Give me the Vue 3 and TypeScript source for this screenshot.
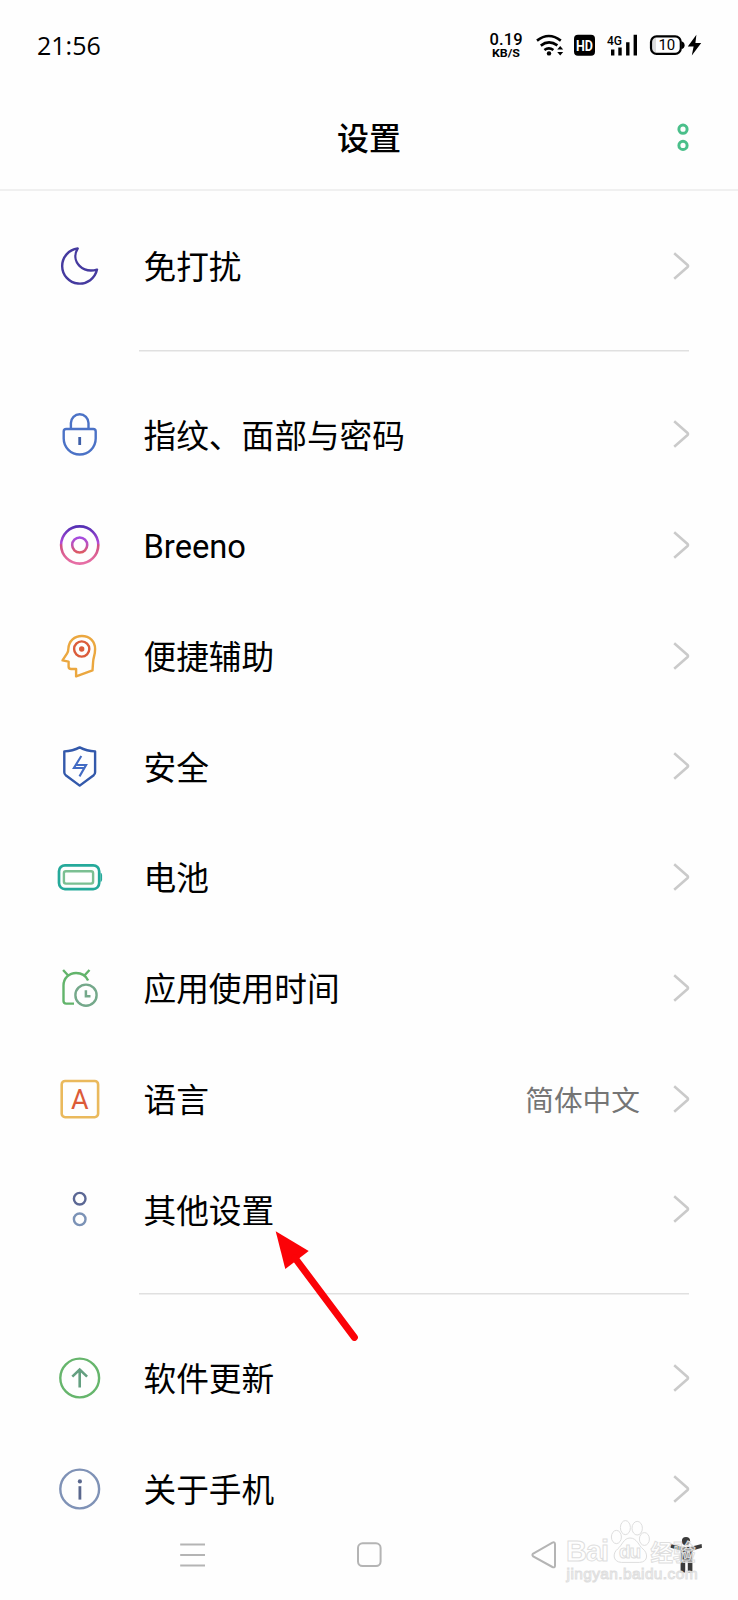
<script setup lang="ts">
interface Row {
  icon: string
  label: string
  value?: string
}

const groups: Row[][] = [
  [{ icon: 'moon', label: '免打扰' }],
  [
    { icon: 'lock', label: '指纹、面部与密码' },
    { icon: 'breeno', label: 'Breeno' },
    { icon: 'assist', label: '便捷辅助' },
    { icon: 'shield', label: '安全' },
    { icon: 'battery', label: '电池' },
    { icon: 'apps', label: '应用使用时间' },
    { icon: 'language', label: '语言', value: '简体中文' },
    { icon: 'more', label: '其他设置' },
  ],
  [
    { icon: 'update', label: '软件更新' },
    { icon: 'about', label: '关于手机' },
  ],
]
</script>

<template>
  <div class="screen">
    <header class="status">
      <span class="time">21:56</span>
      <svg class="indicators" width="216" height="32" viewBox="488 30 216 32">
        <text x="489.6" y="45" class="rate" textLength="33">0.19</text>
        <text x="492" y="57" class="unit" textLength="28" lengthAdjust="spacingAndGlyphs">KB/S</text>
        <g fill="none" stroke="#000" stroke-width="2.6">
          <path d="M537 40.6Q548.8 31.4 560.8 40.6" />
          <path d="M540.8 45.6Q548.8 39.4 557.4 45.4" />
          <path d="M544.4 50Q548.8 46.6 553.4 50" />
        </g>
        <circle cx="549" cy="53.4" r="2.2" />
        <path d="M557.2 49.6L560.2 46L563.2 49.6ZM557.2 52L560.2 55.6L563.2 52Z" />
        <rect x="574" y="34.8" width="21" height="21" rx="4" />
        <text x="576" y="50.8" class="hd" textLength="17" lengthAdjust="spacingAndGlyphs">HD</text>
        <text x="607" y="45.2" class="net" textLength="15" lengthAdjust="spacingAndGlyphs">4G</text>
        <path d="M612.7 49.5V55.4M620 47.5V55.4M627.8 42.3V55.4M635.3 34.8V55.4" stroke="#000" stroke-width="3.4" />
        <path d="M652 38h4v14h-4z" fill="#ddd" />
        <rect x="651" y="36.4" width="29.8" height="17.4" rx="5.6" fill="none" stroke="#000" stroke-width="2.2" />
        <path d="M681.6 41.2Q684.6 42.4 684.6 45.2T681.6 49.2Z" />
        <text x="658.6" y="50.2" class="level" textLength="16.6">10</text>
        <path d="M696.4 34.8L687.8 46.6H693.6L691.8 55.6L701.2 43H695.4Z" />
      </svg>
    </header>

    <div class="titlebar">
      <h1>设置</h1>
      <svg class="menu" width="16" height="32" viewBox="0 0 16 32">
        <g fill="none" stroke="#4abf8a" stroke-width="3">
          <circle cx="8" cy="7.2" r="4.1" />
          <circle cx="8" cy="23.4" r="4.1" />
        </g>
      </svg>
    </div>

    <main>
      <section v-for="(rows, g) in groups" :key="g" class="group">
        <div v-for="row in rows" :key="row.icon" class="row">
          <svg class="icon" width="48" height="48" viewBox="0.3 0 48 48" fill="none" stroke-width="2.4" stroke-linejoin="round">
            <g v-if="row.icon === 'moon'" stroke="#453a9f">
              <path d="M22 6.5A17.6 17.6 0 1 0 41.3 27.6C35.5 29.2 28.5 28.4 23.8 23.8C19.2 19.2 18.4 12.5 22 6.5Z" />
            </g>
            <g v-else-if="row.icon === 'lock'" stroke="#4b72c6">
              <path d="M8 21.5Q8 19 10.5 19H37.5Q40 19 40 21.5V28.5A16 16 0 0 1 8 28.5Z" />
              <path d="M15.2 19V13A8.8 8.8 0 0 1 32.8 13V19" />
              <path d="M24 27V35" stroke="#3e5fa8" stroke-width="2.8" />
            </g>
            <g v-else-if="row.icon === 'breeno'">
              <defs>
                <linearGradient id="ring" x1="0" y1="0" x2="0" y2="1">
                  <stop offset="0" stop-color="#5530b4" />
                  <stop offset=".45" stop-color="#b24ad8" />
                  <stop offset=".5" stop-color="#cf5080" />
                  <stop offset="1" stop-color="#e76fa6" />
                </linearGradient>
                <linearGradient id="core" x1="0" y1="0" x2="0" y2="1">
                  <stop offset="0" stop-color="#a44be0" />
                  <stop offset=".5" stop-color="#c052b4" />
                  <stop offset="1" stop-color="#dd5a62" />
                </linearGradient>
              </defs>
              <circle cx="24" cy="24" r="18.6" stroke="url(#ring)" stroke-width="2.6" />
              <circle cx="24" cy="24" r="7.5" stroke="url(#core)" stroke-width="2.6" />
            </g>
            <g v-else-if="row.icon === 'assist'">
              <path d="M20.4 44.4V37H15.5Q12.9 37 12.9 34.4V29.6L6.8 28.4L11.4 21.4Q12.6 19.6 12.7 16.5C13.2 8.8 18.8 4 26.2 4C34 4 39.4 9.4 39.4 17C39.4 23.5 37.6 25 37.4 30L36.8 38.4Z" stroke="#eba73f" />
              <circle cx="26" cy="17" r="7.6" stroke="#db5c3b" />
              <circle cx="26" cy="17" r="2.7" fill="#db5c3b" />
            </g>
            <g v-else-if="row.icon === 'shield'" stroke="#3359ab">
              <path d="M24 5.4Q31 9 39.4 9.4V30.2Q39.4 32 38 33.2L24 43.6L10 33.2Q8.6 32 8.6 30.2V9.4Q17 9 24 5.4Z" />
              <path d="M25.6 14L18.2 26H28M23.8 34.4L30.4 23H20.8" stroke="#426bc4" stroke-width="2.1" stroke-linejoin="miter" />
            </g>
            <g v-else-if="row.icon === 'battery'">
              <rect x="3.3" y="12.3" width="40.2" height="23.8" rx="6" stroke="#25a99a" stroke-width="2.7" />
              <path d="M44.8 19.5Q46.4 20 46.4 22V26.4Q46.4 28.4 44.8 29Z" fill="#25a99a" />
              <rect x="8.2" y="18.2" width="29.2" height="12.4" rx="2" stroke="#7bbf92" stroke-width="2.4" />
            </g>
            <g v-else-if="row.icon === 'apps'">
              <path d="M18.3 39.6H10.4Q7.8 39.6 7.8 37V21.6C7.8 14 13.6 9 20.4 9C25.8 9 30 11.4 32.4 16.4M7.4 6L12 11M33.8 6L29.2 11" stroke="#62b46b" />
              <circle cx="30.3" cy="31.2" r="10.6" stroke="#74a88a" />
              <path d="M30.2 26.2V32.2H34.8" stroke="#74a88a" stroke-width="2.5" stroke-linejoin="miter" />
            </g>
            <g v-else-if="row.icon === 'language'">
              <rect x="6" y="6" width="36.4" height="36.2" rx="3.4" stroke="#eab95c" stroke-width="2.6" />
              <text x="24.2" y="34" class="letter">A</text>
            </g>
            <g v-else-if="row.icon === 'more'">
              <circle cx="24" cy="13.7" r="5.8" stroke="#5b6794" />
              <circle cx="24" cy="34.3" r="5.8" stroke="#7b92b6" />
            </g>
            <g v-else-if="row.icon === 'update'">
              <circle cx="24" cy="24" r="19.4" stroke="#66b56c" />
              <path d="M24 33.4V15.6M16.6 22.6L24 15.6L31.4 22.6" stroke="#649f80" stroke-width="2.6" stroke-linejoin="miter" />
            </g>
            <g v-else>
              <circle cx="24" cy="24" r="19.4" stroke="#7f92b6" />
              <circle cx="24.2" cy="16.4" r="2.1" fill="#59678d" />
              <path d="M24.2 21.2V34.6" stroke="#59678d" stroke-width="2.8" />
            </g>
          </svg>
          <span class="label">{{ row.label }}</span>
          <span v-if="row.value" class="value">{{ row.value }}</span>
          <svg class="chevron" width="18" height="30" viewBox="0 0 18 30">
            <path d="M2.2 2.2L15.8 14.2Q16.4 15 15.8 15.8L2.2 27.8" fill="none" stroke="#cacaca" stroke-width="2.5" />
          </svg>
        </div>
      </section>
    </main>

    <svg class="pointer" width="90" height="116" viewBox="272 1228 90 116">
      <path d="M275.7 1231.3L308.7 1251L285.3 1269Z" fill="#fb0207" />
      <path d="M295 1258L354.4 1337.4" stroke="#fb0207" stroke-width="7" stroke-linecap="round" />
    </svg>

    <svg class="navbar" width="738" height="90" viewBox="0 1510 738 90">
      <g fill="none" stroke="#b4b4b4" stroke-width="2">
        <path d="M180.2 1544.6H205M180.2 1555H205M180.2 1565.4H205" />
        <rect x="358" y="1543.3" width="22.6" height="22.8" rx="4.6" />
        <path d="M533.2 1553.6L552.4 1542.6Q555 1541.6 555 1544.4V1565.4Q555 1568.2 552.4 1567L533.2 1556.4Q531.6 1555 533.2 1553.6Z" />
      </g>
      <g fill="#3b3b3b">
        <circle cx="686" cy="1541.2" r="4.1" />
        <path d="M670.4 1544L683 1547H690L701.6 1544L702 1547.8L692.4 1550.4V1572.6H687.8V1561.6H685.2V1572.6H680.6V1550.4L670.6 1547.8Z" />
      </g>
      <g class="mark">
        <text x="566" y="1561.4" class="brand" textLength="43">Bai</text>
        <ellipse cx="616.4" cy="1537" rx="5" ry="6.6" />
        <ellipse cx="625.4" cy="1527.6" rx="5" ry="7" />
        <ellipse cx="637.2" cy="1528.2" rx="5.2" ry="6.8" />
        <ellipse cx="644.4" cy="1539" rx="5" ry="6.4" />
        <path d="M630 1538C637 1538 638.6 1545.6 643 1549C648 1553 648.6 1562 639.6 1562.4H621.4C612.6 1562 612.4 1553 617.6 1549C622 1545.6 623.6 1538 630 1538Z" />
        <text x="619" y="1558" class="du" textLength="22">du</text>
        <text x="650.6" y="1560.6" class="exp" textLength="45">经验</text>
        <text x="566.6" y="1579" class="site" textLength="131">jingyan.baidu.com</text>
      </g>
    </svg>
  </div>
</template>

<style>
body {
  margin: 0;
  background: #fefefe;
}
</style>

<style scoped>
.screen {
  position: relative;
  width: 738px;
  height: 1600px;
  overflow: hidden;
  background: #fefefe;
  color: #000;
  font-family: Roboto, "Noto Sans CJK SC", sans-serif;
}
.status {
  display: flex;
  align-items: center;
  justify-content: space-between;
  box-sizing: border-box;
  height: 92px;
  padding: 0 34px 0 37px;
}
.time {
  padding-bottom: 3px;
  font: 25px/30px "Open Sans", sans-serif;
}
.rate { font: 500 16.5px Roboto, sans-serif; }
.unit { font: 700 11.5px Roboto, sans-serif; }
.hd { font: 700 15.5px Roboto, sans-serif; fill: #fff; }
.net { font: 500 13px Roboto, sans-serif; }
.level { font: 400 15px Roboto, sans-serif; }
.letter {
  font: 400 27px Roboto, sans-serif;
  fill: #dc5b38;
  stroke: none;
  text-anchor: middle;
}
.titlebar {
  display: grid;
  grid-template-columns: 1fr auto 1fr;
  align-items: center;
  box-sizing: border-box;
  height: 99px;
  padding: 0 47px 6px;
  border-bottom: 2px solid #f0f0f0;
}
h1 {
  grid-column: 2;
  margin: 0;
  padding-top: 2px;
  font-size: 32px;
  line-height: 40px;
  font-weight: 500;
}
.menu {
  justify-self: end;
}
main {
  padding-top: 19.4px;
}
.group + .group {
  margin-top: 28.6px;
  padding-top: 29.4px;
  background: linear-gradient(#e0e0e0, #e0e0e0) 139px 0 / 550px 1.5px no-repeat;
}
.row {
  display: flex;
  align-items: center;
  height: 110.7px;
  padding: 0 48px 0 56px;
}
.icon {
  flex: none;
  overflow: visible;
}
.label {
  flex: 1;
  margin-left: 39.5px;
  padding-top: 4.6px;
  font-size: 32.7px;
  line-height: 44px;
}
.value {
  margin-right: 32px;
  color: #757575;
  font-size: 28.7px;
}
.chevron {
  flex: none;
}
.pointer {
  position: absolute;
  left: 272px;
  top: 1228px;
}
.navbar {
  position: absolute;
  left: 0;
  top: 1510px;
}
.mark {
  fill: #fff;
  fill-opacity: 0.45;
  stroke: #dedede;
  stroke-width: 1;
}
.brand { font: 700 29px "Liberation Sans", sans-serif; }
.du { font: 700 19px "Liberation Sans", sans-serif; }
.exp { font: 700 22.5px "Noto Sans CJK SC", sans-serif; }
.site { font: 400 15.5px "Liberation Sans", sans-serif; }
</style>
